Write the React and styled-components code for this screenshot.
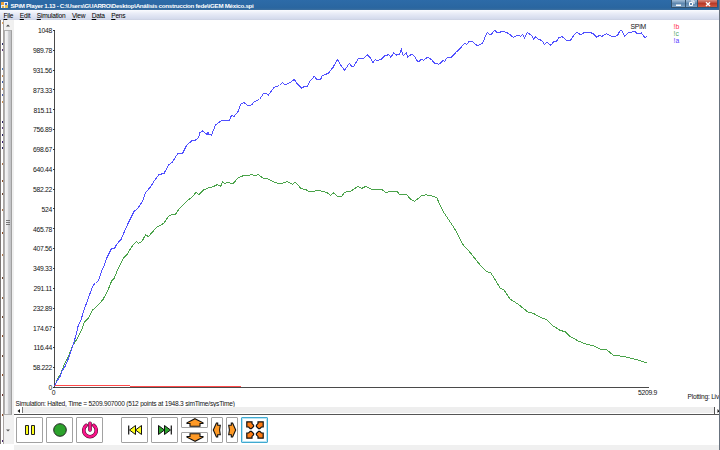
import React from "react";
import styled, { createGlobalStyle } from "styled-components";

const GlobalStyle = createGlobalStyle`
  * { box-sizing: border-box; }
  body {
    margin: 0;
    overflow: hidden;
    font-family: "Liberation Sans", Arial, sans-serif;
    background: #fff;
  }
  svg { display: block; }
`;

const Window = styled.div`
  width: 720px;
  height: 450px;
  display: flex;
  flex-direction: column;
  overflow: hidden;
  background: #fff;
  border-right: 1px solid #68727e;
`;

const TitleBar = styled.div`
  height: 10px;
  flex: none;
  display: flex;
  align-items: center;
  padding: 0 1px;
  background: linear-gradient(#2d6ba8, #2a66a0 80%, #3e6f9e);
  color: #fff;
`;

const Title = styled.div`
  flex: 1;
  margin-left: 2.5px;
  font-size: 6.2px;
  line-height: 9px;
  font-weight: bold;
  letter-spacing: -0.28px;
  white-space: nowrap;
`;

const WindowButton = styled.div`
  width: ${p => p.$width}px;
  height: 8px;
  align-self: flex-start;
  display: flex;
  align-items: center;
  justify-content: center;
  border: 1px solid #34536f;
  border-top: none;
  border-right-width: ${p => (p.$close ? 1 : 0)}px;
  border-radius: ${p => (p.$close ? "0 0 2px 0" : "0")};
  background: ${p =>
    p.$close
      ? "linear-gradient(#d98d80, #b93a28 50%, #cf5a43)"
      : "linear-gradient(#a5bfd8, #5e87af 50%, #7da1c3)"};
`;

const MenuBar = styled.div`
  height: 10px;
  flex: none;
  display: flex;
  align-items: center;
  padding-left: 3.5px;
  gap: 6.4px;
  background: linear-gradient(#fafbfe, #e6eaf6 40%, #d4daec 90%, #c9cfdf);
`;

const MenuItem = styled.div`
  font-size: 6.6px;
  line-height: 9px;
  letter-spacing: -0.2px;
  color: #000;
  &::first-letter { text-decoration: underline; }
`;

const Body = styled.div`
  flex: 1;
  min-height: 0;
  display: flex;
`;

const SideStrip = styled.div`
  width: 14px;
  height: 424px;
  display: flex;
  border-left: 1px solid #7c7674;
  border-right: 2px solid #f0f0f0;
`;

const CodeEdge = styled.div`
  width: 2px;
`;

const SideScroll = styled.div`
  width: 9px;
  display: flex;
  flex-direction: column;
  border-left: 1px solid #a9a4a2;
  background: #f1f1f1;
`;

const ScrollArrow = styled.div`
  height: ${p => p.$height}px;
  display: flex;
  align-items: center;
  justify-content: center;
`;

const SideThumb = styled.div`
  height: 385px;
  display: flex;
  align-items: center;
  justify-content: center;
  border: 1px solid #b0b0b0;
  border-right-color: #a0a0a0;
  background: linear-gradient(90deg, #f5f5f5 0, #e9e9eb 45%, #cccdd0 60%, #c0c1c4);
`;

const Main = styled.div`
  flex: 1;
  min-width: 0;
  display: flex;
  flex-direction: column;
  overflow: hidden;
`;

const Plot = styled.div`
  height: 373px;
  flex: none;
  svg { overflow: visible; }
`;

const StatusRow = styled.div`
  height: 14px;
  flex: none;
  display: flex;
  justify-content: space-between;
  padding-left: 1.5px;
  color: #111;
  white-space: nowrap;
`;

const Status = styled.div`
  font-size: 6.6px;
  line-height: 8px;
  letter-spacing: ${p => p.$spacing || 0}px;
  padding-top: ${p => p.$top}px;
`;

const HScroll = styled.div`
  height: 8px;
  flex: none;
  display: flex;
  border-bottom: 1px solid #555;
`;

const HTrack = styled.div`
  flex: 1;
  height: 6px;
  background: #eee;
  border-left: 1px solid #777;
`;

const HEnd = styled.div`
  width: 5px;
  display: flex;
  align-items: center;
  justify-content: flex-end;
  border-left: 1px solid #555;
`;

const HStart = styled.div`
  width: 8px;
  display: flex;
  align-items: center;
  justify-content: center;
`;

const Toolbar = styled.div`
  height: 30px;
  flex: none;
  display: flex;
  align-items: flex-start;
  padding: 2px 0 0 2px;
  gap: 3px;
`;

const ToolButton = styled.div`
  width: ${p => p.$width || 27}px;
  height: ${p => p.$height || 26}px;
  margin-right: ${p => p.$after || 0}px;
  display: flex;
  align-items: center;
  justify-content: center;
  border: 1px solid ${p => (p.$active ? "#3fa9d0" : "#a2a2a2")};
  border-radius: 1px;
  background: #fff;
  box-shadow: ${p => (p.$active ? "inset 0 0 0 1px #b8e4f3" : "none")};
`;

const ToolStack = styled.div`
  display: flex;
  flex-direction: column;
  gap: 4px;
`;

const Footer = styled.div`
  flex: 1;
  background: #f0f0f0;
`;

const ticks = [
  "1048", "989.78", "931.56", "873.33", "815.11", "756.89", "698.67",
  "640.44", "582.22", "524", "465.78", "407.56", "349.33", "291.11",
  "232.89", "174.67", "116.44", "58.222", "0"
];

const seriesA =
  "54.5,386.5 57,381 60,376.5 62,371 65,366.5 67.5,361 70,354 72,348 73.5,344 76,335 78.5,324.5 80.5,321.5 83.5,311.5 88.5,297.5 93.5,284.5 95.5,283.5 98.5,280.5 101.5,271.5 104,266 106.5,258.5 111.5,248.5 114.5,248.5 116.5,244.5 120,240.5 " +
  "121,239.5 127.3,225 134,211.5 138,208 142.5,201.5 145.5,192.5 150,187.5 155.5,179 159,174.5 164,173.5 168.5,165 172.5,162 177.5,154 182.5,153.5 186.5,145.5 191.5,141 195,140.5 198.5,137.5 200,132.5 202.5,131 205.5,133.5 207.3,134.5 208,132.5 209,134.5 211.5,135 215.5,125 220,121.5 224,120 229.5,120 231.5,115.5 234,116.5 238,111.5 240.5,104.5 244,102.5 247.5,105.5 251.5,105 254.5,101.5 259.5,99.5 263.5,93.5 266,93.5 268.5,95 274,87.5 279.5,85.5 282.5,82.5 285,85 288,83.3 290.5,82.5 " +
  "294.3,79.3 297.3,84 301.7,88.3 304,86.7 307.7,86 310,81 314.3,76.3 317.3,80 320.7,79.3 322,75.7 328.3,73.3 333.3,67 337.3,59.3 340,64 344.7,70.3 349.3,63.3 351.7,66.3 353.7,66.3 358.3,58.7 364,58.3 367.3,54.7 370,57.3 373,62.7 375.3,59.3 377.3,60.7 381.3,59.3 385,55.7 388.7,54.7 391,57.3 393.7,52.7 396.7,55.3 399.7,54 401.3,49.3 403.3,56 406.3,52.7 407.7,57 411.7,54 415,57 418,62.3 421.3,59.3 423.3,60.3 427.7,57 431.7,59.7 434.3,63 439,64.3 " +
  "442.7,60.7 444.7,61.3 447.3,57.3 451.7,57 456,52.3 460.7,48 464.3,43.3 466.7,44.3 469.3,41.3 472.7,42 477.3,45.7 482.7,43 485.3,36.7 487.3,32.7 490.7,35 494.7,30.3 497.3,33 502.7,31.3 508.3,33.3 513.3,37.3 517.7,35 520.7,36.3 522.7,34.3 524.7,38 527.3,32.7 531.7,35.3 533.7,39 535.7,36.7 538.3,39 542,40.7 544.3,44.3 547.3,42.3 550.7,45.3 553.7,41.7 556,42 559,37.3 562.3,36.7 566.7,40.7 570.7,40 574.7,34 577.3,32.3 581,35 584.3,32.3 590,32.3 593.7,34 596.7,37.3 599.3,35.3 601.7,36.5 606.3,33.7 610,35.7 613.7,37 617.7,35 620.3,30.3 622,30.7 624.7,36 628.3,32.7 631.7,32 635,31.3 637.3,34 641.3,33 645,38 646.7,36.3";

const seriesC =
  "54.5,386.5 57.3,379.3 60.7,374 64,365 68.3,356.7 72.7,345.7 77.3,338.3 81.7,330 84.3,322.3 88.3,318.3 92.7,310 98.3,305 103.3,299 108.3,289.3 111.7,280.7 114.3,278.3 117.7,269.3 123.3,258.3 127.3,254.3 131.7,246.7 136.3,241.7 138.3,243.3 141,242 143.3,239 145.5,234.8 148.5,236.5 156.7,227.3 163.7,223.3 169.3,215.3 175.7,214 180,207.7 188.3,200 193.7,195.7 196,192 198.7,194.7 203.3,190 208.3,188 213.3,186.7 217,184.7 220.7,186.3 222.7,181.7 224.7,183.3 228,182.5 232.7,184 238.3,177.7 243.3,175.7 249,175.3 252,174.7 255.7,175.7 258.3,174.3 262.7,178 268.3,179 274,182 279.3,184 " +
  "287.3,181.7 292.3,184.3 295.3,182.3 298.3,185 300.7,188.3 306,189.7 309.3,191.7 313.3,191.7 317.3,190.3 326.7,192.3 330.3,195.3 334,192.7 337.3,196.3 341.7,196.7 344.3,192.3 351.3,191 357.7,186.3 362,188.3 366,186.3 371.7,189.3 381.7,189.3 385.7,192.7 391.7,191 396.7,191 400,195 406.7,194.7 410,198.7 414.7,201.3 421.7,195.7 426,194.7 433.3,196.3 436.7,197.7 442.7,210.7 450,221.7 456.7,232 462.7,244.3 470,252.3 479.5,264.3 486.7,271.7 490.7,272.7 496,281 500,288 504.3,290.3 510,299 518.3,304.3 528.3,312.3 533.3,313.3 541.7,318 546.7,319.7 551.7,325 560,330.3 565,331.7 569.3,336 578.3,341 585,343.7 593.3,345.7 600.7,349.3 606.7,350 613.3,355 625,356.7 636.7,359.7 646.7,362.7";

function Chart() {
  return (
    <svg width="705" height="373" viewBox="14 20 705 373" fontSize="6.8" letterSpacing="-0.3" fill="#111">
      <g shapeRendering="crispEdges" fill="none" strokeWidth="1">
        <path d="M54.5 30V388M54 387.5H649" stroke="#4a4a4a" />
        {ticks.map((t, i) => (
          <path key={t} d={`M53 ${Math.round(30 + i * 19.83) + 0.5}h2`} stroke="#333" />
        ))}
        <path d="M55 385.5H130M130 386.5H241" stroke="#ff4a4a" />
        <polyline points={seriesC} stroke="#4aa34a" />
        <polyline points={seriesA} stroke="#5050ff" />
      </g>
      {ticks.map((t, i) => (
        <text key={t} x="52" y={33.2 + i * 19.83} textAnchor="end">{t}</text>
      ))}
      <text x="51.8" y="395.3">0</text>
      <text x="638" y="395.3">5209.9</text>
      <text x="630.5" y="29.3" letterSpacing="-0.2">SPiM</text>
      <g letterSpacing="0.1">
        <text x="673.5" y="29.2" fill="#ff2a4a">!b</text>
        <text x="673.5" y="36.2" fill="#4fa56a">!c</text>
        <text x="673.5" y="43.2" fill="#5a3cff">!a</text>
      </g>
    </svg>
  );
}

// what is left visible of the code editor behind the scroll bar
const edgeMarks = [
  [3, "#e8a860"], [24, "#2b2b66"], [30, "#5a3c7a"], [49, "#4a78b8"], [56, "#c98b4e"],
  [62, "#3d5fa8"], [69, "#c98b4e"], [75, "#4a5fa8"], [82, "#c98b4e"], [102, "#2a2260"],
  [108, "#5a3c7a"], [115, "#2a2260"], [122, "#3a2270"], [128, "#2a2260"], [144, "#a8754e"],
  [161, "#8b4e2a"], [174, "#6a4430"], [190, "#a8754e"], [213, "#8b4e2a"], [235, "#b07a50"],
  [258, "#6a4430"], [278, "#8b5e3a"], [297, "#6a4430"], [316, "#8b4e2a"], [336, "#6a4430"],
  [355, "#8b4e2a"], [375, "#6a3430"], [395, "#8b4e2a"], [421, "#4a2a70"]
];

const Arrow = ({ angle, wide }) => (
  <svg width={wide ? 18 : 10} height={wide ? 9 : 18} viewBox={wide ? "-9 -4.5 18 9" : "-5 -9 10 18"}>
    <path
      d={wide ? "M0-3.8 8 .3V1H5V3.8H-5V1H-8V.3Z" : "M3.7 0 .6 7H-.7V4.7H-3.3L-2.6 0-3.3-4.7H-.7V-7H.6Z"}
      transform={`rotate(${angle})`}
      fill="#ff9a26"
      stroke="#111"
      strokeWidth="1.1"
    />
  </svg>
);

const Skip = ({ color, flip }) => (
  <svg width="16" height="12" viewBox="0 0 16 12">
    <g transform={flip ? "translate(16 0) scale(-1 1)" : undefined} fill={color} stroke="#111" strokeWidth="1">
      <path d="M1.5 1.5V10.5L7.5 6Z" />
      <path d="M7.5 1.5V10.5L13.5 6Z" />
      <path d="M14.3 1.5V10.5" strokeWidth="1.2" />
    </g>
  </svg>
);

export default function App() {
  return (
    <>
      <GlobalStyle />
      <Window>
        <TitleBar>
          <svg width="7" height="8" viewBox="0 0 7 8">
            <path d="M0 1h7v6H0z" fill="#e9eef5" />
            <path d="M0 1h3v3H0z" fill="#e8a13a" />
            <path d="M4 2h2v2H4z" fill="#3b6ec2" />
            <path d="M1 5h2v2H1z" fill="#d9b04a" />
            <path d="M4 4h3v3H4z" fill="#e9c257" />
          </svg>
          <Title>SPiM Player 1.13 - C:\Users\GUARRO\Desktop\Análisis construccion fede\iGEM México.spi</Title>
          <WindowButton $width={14}>
            <svg width="7" height="6"><path d="M1 3.5h5v1.5H1z" fill="#fff" /></svg>
          </WindowButton>
          <WindowButton $width={12}>
            <svg width="7" height="7" fill="none" stroke="#fff">
              <path d="M1.5 2.5h3v3h-3zM3 1h3v3" />
            </svg>
          </WindowButton>
          <WindowButton $width={21} $close>
            <svg width="6" height="6"><path d="M1 1.2 5 5M5 1.2 1 5" stroke="#fff" strokeWidth="1.4" /></svg>
          </WindowButton>
        </TitleBar>
        <MenuBar>
          <MenuItem>File</MenuItem>
          <MenuItem>Edit</MenuItem>
          <MenuItem>Simulation</MenuItem>
          <MenuItem>View</MenuItem>
          <MenuItem>Data</MenuItem>
          <MenuItem>Pens</MenuItem>
        </MenuBar>
        <Body>
          <SideStrip>
            <CodeEdge>
              <svg width="2" height="424">
                {edgeMarks.map(([y, color]) => (
                  <rect key={y} x="1" y={y - 1} width="1" height="2" fill={color} />
                ))}
              </svg>
            </CodeEdge>
            <SideScroll>
              <ScrollArrow $height={10}>
                <svg width="4" height="3"><path d="M0 2.5 2 .5 4 2.5Z" fill="#444" /></svg>
              </ScrollArrow>
              <SideThumb>
                <svg width="4" height="5"><path d="M0 .5h4M0 2.5h4M0 4.5h4" stroke="#777" /></svg>
              </SideThumb>
              <ScrollArrow $height={29}>
                <svg width="4" height="9"><path d="M0 4.5 2 6.5 4 4.5Z" fill="#555" /></svg>
              </ScrollArrow>
            </SideScroll>
          </SideStrip>
          <Main>
            <Plot>
              <Chart />
            </Plot>
            <StatusRow>
              <Status $top={7} $spacing={-0.22}>
                Simulation: Halted, Time = 5209.907000 (512 points at 1948.3 simTime/sysTime)
              </Status>
              <Status $top={0} $spacing={-0.2}>Plotting: Liv</Status>
            </StatusRow>
            <HScroll>
              <HStart>
                <svg width="3" height="4"><path d="M3 0 .5 2 3 4Z" fill="#111" /></svg>
              </HStart>
              <HTrack />
              <HEnd>
                <svg width="2" height="4"><path d="M.5 0 2.5 2 .5 4Z" fill="#111" /></svg>
              </HEnd>
            </HScroll>
            <Toolbar>
              <ToolButton>
                <svg width="12" height="12" fill="#ffff1a" stroke="#222">
                  <path d="M1.5 1.5h3v9h-3zM7.5 1.5h3v9h-3z" />
                </svg>
              </ToolButton>
              <ToolButton>
                <svg width="14" height="14">
                  <circle cx="7" cy="7" r="6.3" fill="#2ca22c" stroke="#262626" />
                </svg>
              </ToolButton>
              <ToolButton $after={15}>
                <svg width="18" height="18" fill="none" strokeLinecap="round">
                  <g stroke="#4a0a2c" strokeWidth="3.6">
                    <path d="M5.3 4.3a6.3 6.3 0 1 0 7.4 0M9 2.2V9" />
                  </g>
                  <g stroke="#fa1489" strokeWidth="2.5">
                    <path d="M5.3 4.3a6.3 6.3 0 1 0 7.4 0M9 2.2V9" />
                  </g>
                </svg>
              </ToolButton>
              <ToolButton>
                <Skip color="#ffff1a" flip />
              </ToolButton>
              <ToolButton>
                <Skip color="#2ca22c" />
              </ToolButton>
              <ToolStack>
                <ToolButton $height={11}><Arrow wide angle={0} /></ToolButton>
                <ToolButton $height={11}><Arrow wide angle={180} /></ToolButton>
              </ToolStack>
              <ToolButton $width={12}><Arrow angle={180} /></ToolButton>
              <ToolButton $width={12}><Arrow angle={0} /></ToolButton>
              <ToolButton $active>
                <svg width="18" height="18" viewBox="-9 -9 18 18" fill="#ff7d14" stroke="#111" strokeWidth="1.2">
                  {[0, 90, 180, 270].map(a => (
                    <path key={a} d="M-8.2-8.2H-3V-6.4L-1.4-4.8V-3.6L-3.6-1.4H-4.8L-6.4-3H-8.2Z" transform={`rotate(${a})`} />
                  ))}
                </svg>
              </ToolButton>
            </Toolbar>
            <Footer />
          </Main>
        </Body>
      </Window>
    </>
  );
}
